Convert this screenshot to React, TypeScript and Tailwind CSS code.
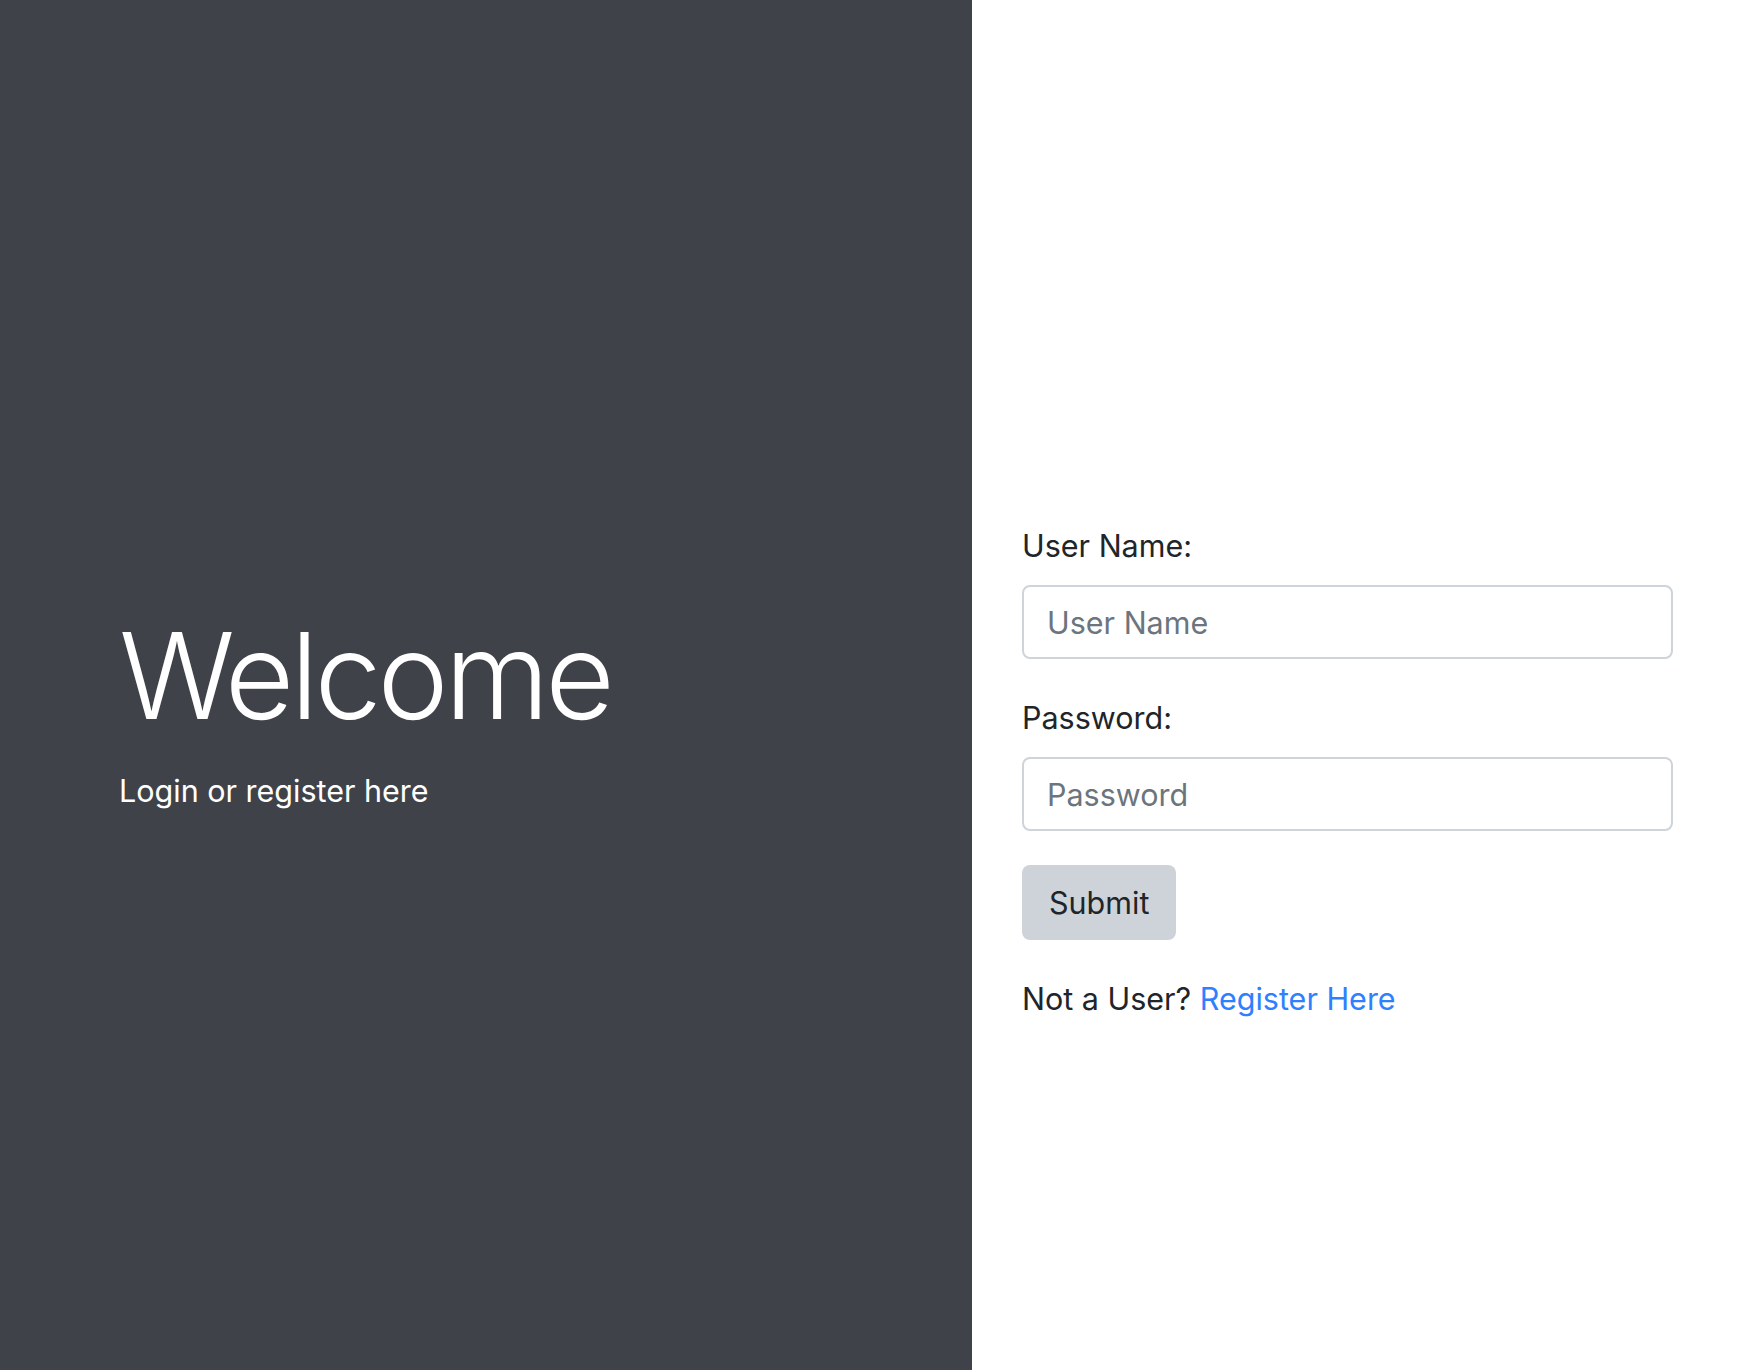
export default function App() {
  return (
    <div
      className="flex min-h-screen"
      style={{ fontFamily: "Inter, 'Noto Sans', sans-serif" }}
    >
      <div className="w-[972px] shrink-0 bg-[#3f4249] pl-[119px] pt-[604px] text-white">
        <h1 className="text-[120px] font-light leading-[1.2] tracking-[-4px]">Welcome</h1>
        <p className="mt-[20px] text-[30.5px] leading-[45px]">Login or register here</p>
      </div>
      <div className="flex-1 bg-white pl-[50px] pt-[523px] text-[#212529]">
        <form className="w-[651px]" onSubmit={(e) => e.preventDefault()}>
          <label className="block text-[30.5px] leading-[45px]">User Name:</label>
          <input
            type="text"
            placeholder="User Name"
            className="mt-[17px] block h-[74px] w-full rounded-[8px] border-2 border-[#ced4da] px-[23px] text-[30.5px] placeholder:text-[#6c757d] outline-none"
          />
          <label className="mt-[36px] block text-[30.5px] leading-[45px]">Password:</label>
          <input
            type="password"
            placeholder="Password"
            className="mt-[17px] block h-[74px] w-full rounded-[8px] border-2 border-[#ced4da] px-[23px] text-[30.5px] placeholder:text-[#6c757d] outline-none"
          />
          <button
            type="submit"
            className="mt-[34px] block h-[75px] rounded-[8px] bg-[#ced3da] px-[27px] text-[30.5px] text-[#212529]"
          >
            Submit
          </button>
          <p className="mt-[36px] text-[30.5px] leading-[45px]">
            Not a User?{" "}
            <a href="#" className="text-[#2f80ff]">
              Register Here
            </a>
          </p>
        </form>
      </div>
    </div>
  );
}
